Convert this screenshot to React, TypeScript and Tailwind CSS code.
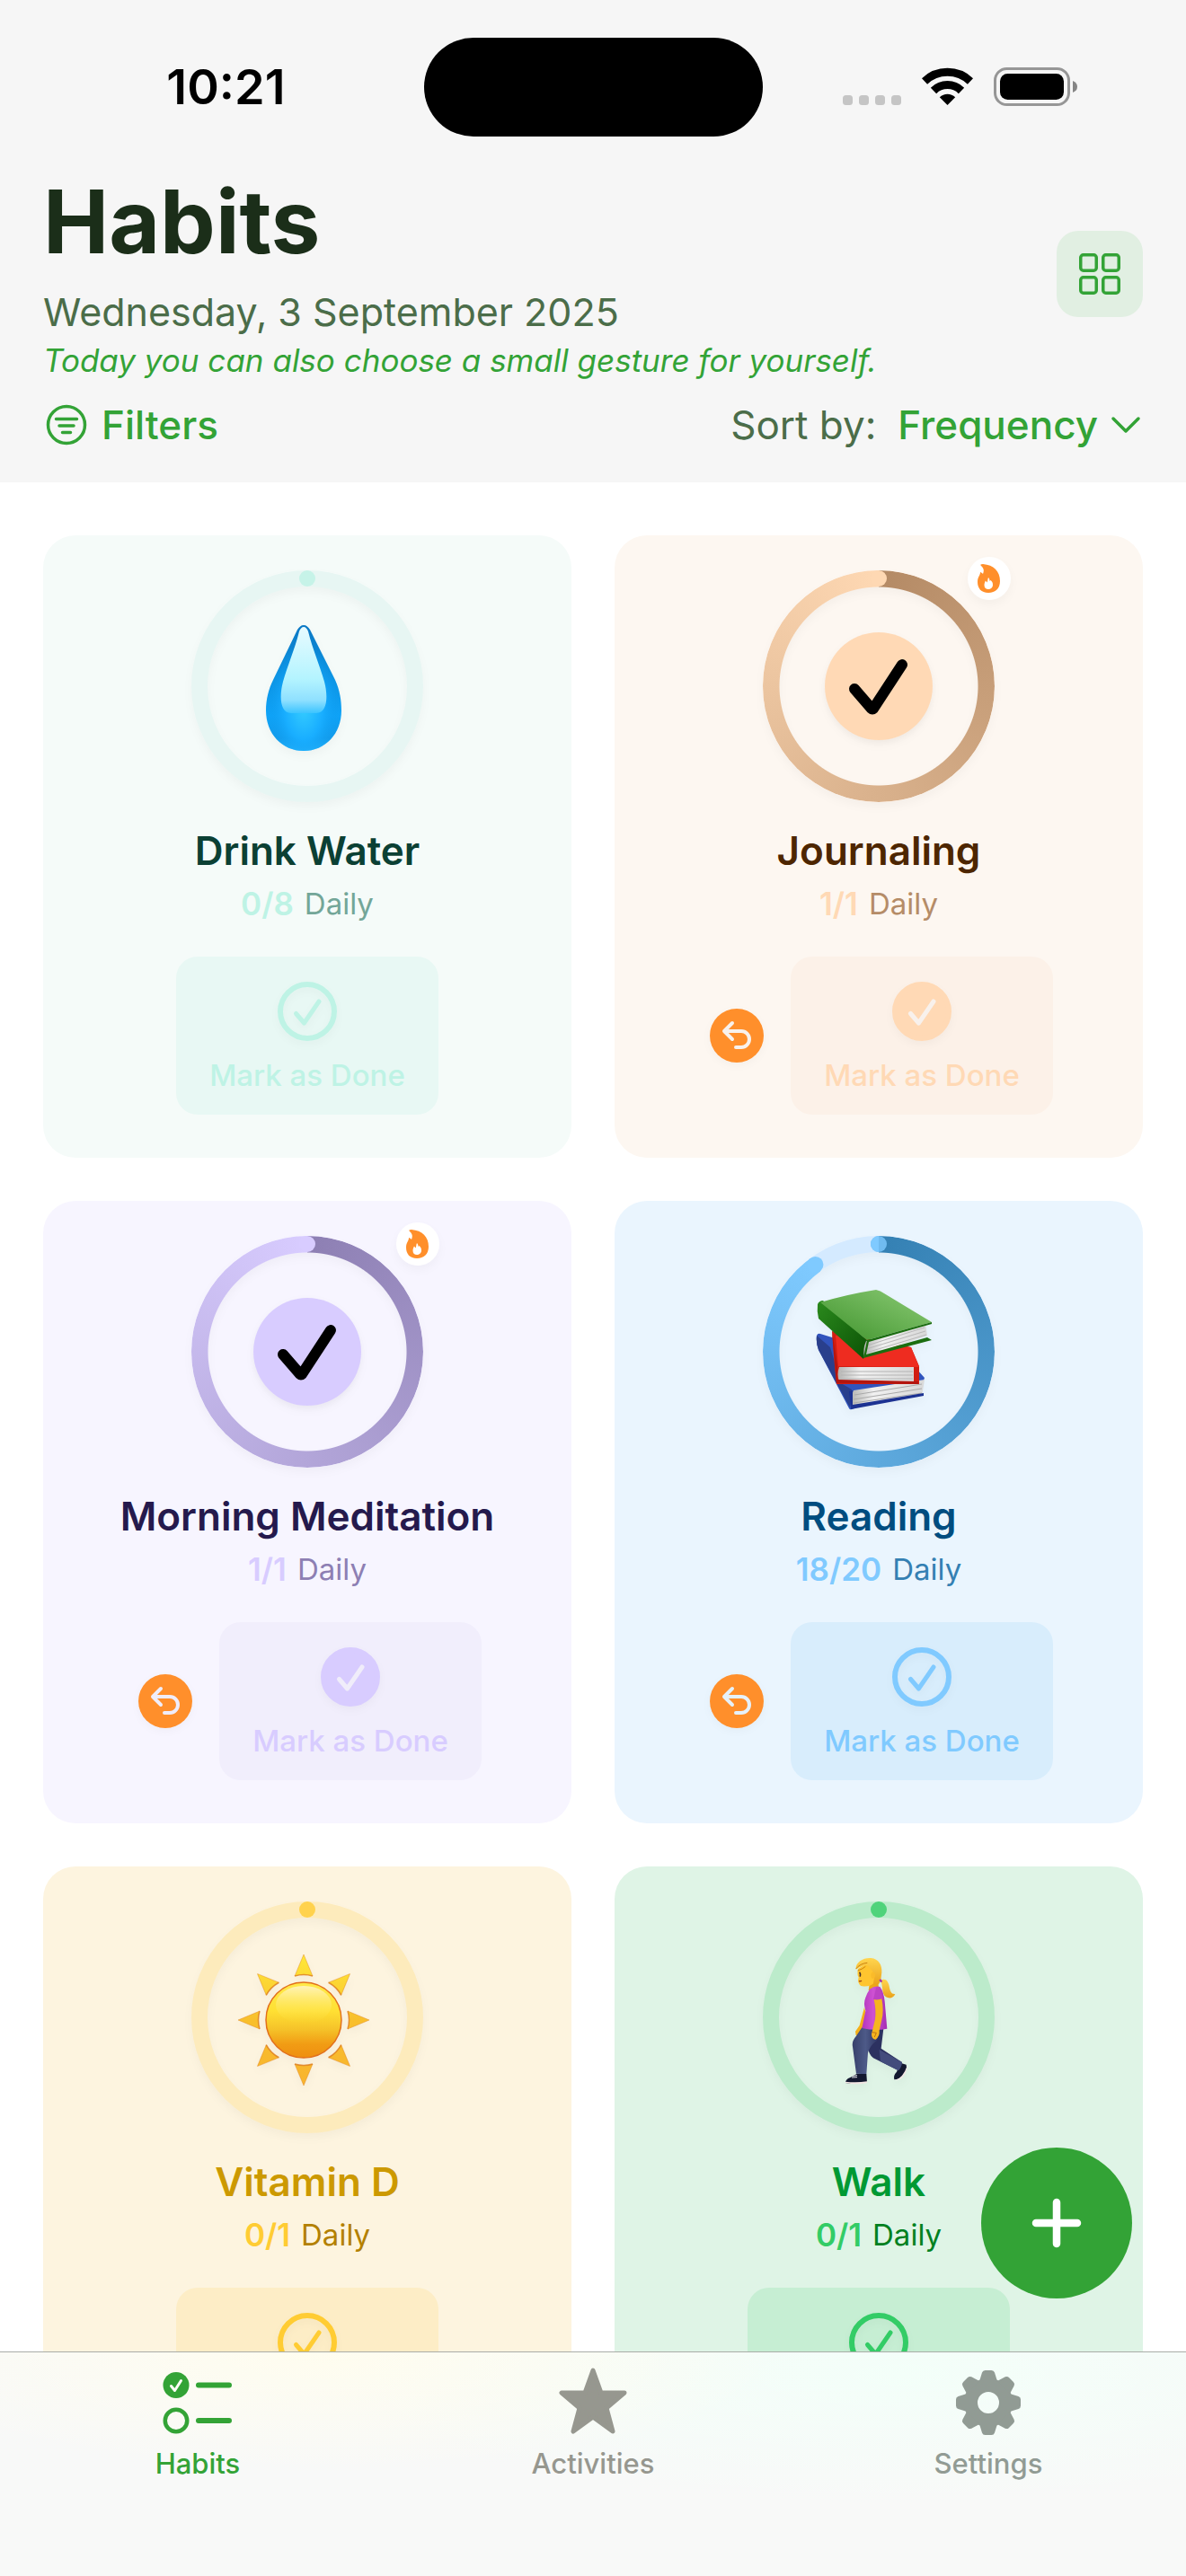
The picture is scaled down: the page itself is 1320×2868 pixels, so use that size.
import React from "react";

type Habit = {
  name: string;
  count: string;
  progress: number;
  complete?: boolean;
  undo?: boolean;
  emoji?: React.ReactNode;
  card: string;
  title: string;
  accent: string;
  muted: string;
  button: string;
  track: string;
  dark: string;
  light: string;
  cutout: string;
};

function Drop() {
  return (
    <svg viewBox="0 0 160 160" className="size-40" aria-hidden="true">
      <defs>
        <linearGradient id="dropBody" x1="0" y1="0" x2="0" y2="1">
          <stop offset="0" stopColor="#0b78c4" />
          <stop offset=".35" stopColor="#0c8fdd" />
          <stop offset=".72" stopColor="#0fa4f8" />
          <stop offset=".9" stopColor="#149be9" />
          <stop offset="1" stopColor="#2fbcff" />
        </linearGradient>
        <linearGradient id="dropShine" x1="0" y1="0" x2="0" y2="1">
          <stop offset="0" stopColor="#e8fbff" />
          <stop offset=".6" stopColor="#b4f4ff" />
          <stop offset=".85" stopColor="#8fe0ff" />
          <stop offset="1" stopColor="#3cc4ff" />
        </linearGradient>
        <radialGradient id="dropEdge" cx=".5" cy=".66" r=".5">
          <stop offset="0" stopColor="#35ccff" />
          <stop offset=".5" stopColor="#19aeff" />
          <stop offset="1" stopColor="#0a96ec" stopOpacity="0" />
        </radialGradient>
      </defs>
      <path d="M76 12c3 0 5 2 7 5l28 56c5 11 7 22 7 34 0 26-18 45-42 45s-42-19-42-45c0-12 3-24 8-34l27-56c2-3 4-5 7-5z" fill="url(#dropBody)" />
      <path d="M76 12c3 0 5 2 7 5l28 56c5 11 7 22 7 34 0 26-18 45-42 45s-42-19-42-45c0-12 3-24 8-34l27-56c2-3 4-5 7-5z" fill="url(#dropEdge)" />
      <path d="M76 14c2 0 4 2 5 5 5 20 13 38 18 56 4 15 4 35-9 35H62c-13 0-13-20-9-35 5-18 13-36 18-56 1-3 3-5 5-5z" fill="url(#dropShine)" />
    </svg>
  );
}

function Books() {
  return (
    <svg viewBox="0 0 160 160" className="size-40" aria-hidden="true">
      <defs>
        <linearGradient id="bookGreen" x1="0" y1="1" x2="1" y2="0">
          <stop offset="0" stopColor="#3f932c" />
          <stop offset="1" stopColor="#8ccb76" />
        </linearGradient>
        <linearGradient id="bookSpine" x1="0" y1="0" x2="1" y2="1">
          <stop offset="0" stopColor="#2b8a1d" />
          <stop offset="1" stopColor="#0b5205" />
        </linearGradient>
        <linearGradient id="bookPages" x1="0" y1="0" x2="1" y2="0">
          <stop offset="0" stopColor="#b5b5b3" />
          <stop offset=".3" stopColor="#f1f1f1" />
          <stop offset="1" stopColor="#d8d8d8" />
        </linearGradient>
      </defs>
      <path d="M11 62q1-3 4-2l13 4 94 35 9 10-3 8-78 27q-2 1-3-1L13 78q-3-8-2-16z" fill="#3154bd" />
      <path d="M11 62l15 13 12 40 12 7-2 20L13 78q-3-8-2-16z" fill="#293f8c" />
      <path d="M52 123l79-12-3 18-78 12q-2-10 2-18z" fill="url(#bookPages)" />
      <path d="M53 128l75-12M52 133l76-12M52 137l76-11" stroke="#aaa" strokeWidth="1" />
      <path d="M49 144l-2-20 4-1 0 16 79-13v3z" fill="#1c3292" />
      <path d="M28 57l88 18 9 21v20l-92 0q-3-27-5-59z" fill="#d11d12" />
      <path d="M32 62l84 13 9 22-90-1z" fill="#ee2c20" />
      <path d="M36 97h83v16H36q-3-8 0-16z" fill="url(#bookPages)" />
      <path d="M38 102h80M38 106h80M37 110h81" stroke="#b4b4b4" strokeWidth="1" />
      <path d="M28 57l6 38v16l90 2v3l-91-1z" fill="#b3150e" />
      <path d="M12 27q2-4 6-4l50 45-5 20L13 43q-2-8-1-16z" fill="url(#bookSpine)" />
      <path d="M66 68l66-20 2 14-70 24q-2-9 2-18z" fill="url(#bookPages)" />
      <path d="M67 73l64-20M66 77l66-20M66 81l67-20" stroke="#b8b8b8" strokeWidth="1" />
      <path d="M15 25q30-9 62-14 5 1 9 4l53 32-72 20z" fill="url(#bookGreen)" />
      <path d="M139 47l-72 20-4 20 76-20-5-3-68 19 3-14 70-20z" fill="#1b6d10" />
    </svg>
  );
}

function Sun() {
  const rays = [0, 45, 90, 135, 180, 225, 270, 315];
  return (
    <svg viewBox="0 0 160 160" className="size-40" aria-hidden="true">
      <defs>
        <linearGradient id="sunDisc" x1="0" y1="0" x2="0" y2="1">
          <stop offset="0" stopColor="#ffe94a" />
          <stop offset=".38" stopColor="#ffe033" />
          <stop offset=".62" stopColor="#f5c329" />
          <stop offset=".82" stopColor="#f19c14" />
          <stop offset="1" stopColor="#ef8f10" />
        </linearGradient>
        <linearGradient id="sunShine" x1="0" y1="0" x2="0" y2="1">
          <stop offset="0" stopColor="#fff3b8" />
          <stop offset="1" stopColor="#ffe338" stopOpacity="0" />
        </linearGradient>
        <linearGradient id="sunRay" gradientUnits="userSpaceOnUse" x1="0" y1="10" x2="0" y2="156">
          <stop offset="0" stopColor="#ffe838" />
          <stop offset=".5" stopColor="#f8bf2c" />
          <stop offset="1" stopColor="#f8b42f" />
        </linearGradient>
        <clipPath id="sunRays">
          {rays.map((a) => (
            <path key={a} d="M76 10l10 24q-10-3-20 0z" transform={`rotate(${a} 76 83)`} />
          ))}
        </clipPath>
      </defs>
      <rect width="160" height="160" fill="url(#sunRay)" clipPath="url(#sunRays)" />
      {rays.map((a) => (
        <g key={a} transform={`rotate(${a} 76 83)`} fill="none" stroke="#dc7a1a">
          <path d="M76 10l10 24M76 10L66 34" strokeWidth="1" opacity=".4" />
          <path d="M86 34q-10-3-20 0" strokeWidth="1.5" opacity=".8" />
        </g>
      ))}
      <circle cx="76" cy="83" r="42" fill="url(#sunDisc)" stroke="#e2701a" strokeWidth="1.5" />
      <ellipse cx="76" cy="66" rx="31" ry="21" fill="url(#sunShine)" />
    </svg>
  );
}

function Walker() {
  return (
    <svg viewBox="0 0 160 160" className="size-40" aria-hidden="true">
      <defs>
        <linearGradient id="hair" x1="0" y1="0" x2="0" y2="1">
          <stop offset="0" stopColor="#ffd54f" />
          <stop offset="1" stopColor="#eaa21a" />
        </linearGradient>
        <linearGradient id="shirt" x1="0" y1="0" x2="1" y2="0">
          <stop offset="0" stopColor="#b235bd" />
          <stop offset=".45" stopColor="#cf52d3" />
          <stop offset="1" stopColor="#a52db2" />
        </linearGradient>
        <linearGradient id="jeans" x1="0" y1="0" x2="1" y2="0">
          <stop offset="0" stopColor="#37406b" />
          <stop offset=".5" stopColor="#4d5a88" />
          <stop offset="1" stopColor="#2d3360" />
        </linearGradient>
      </defs>
      <g transform="translate(2 -6) scale(.3333)">
        <path d="M240 136c16-12 26 2 29 18 3 18 8 28 20 26-5 14-20 16-31 10-16-10-8-36-18-54z" fill="url(#hair)" />
        <path d="M186 225l-16 60-14 20 2 14 18-4 20-50z" fill="#f3b019" />
        <path d="M286 466q-4-14 8-26l12-30 20 6q4 18-8 32-14 18-32 18z" fill="#13182f" />
        <path d="M288 468q26-4 42-50-2 28-20 44-12 8-22 6z" fill="#f3e6e4" />
        <path d="M202 296h48l-8 66 70 46q-2 18-12 28l-84-42q-18-14-16-38z" fill="#2c3160" />
        <path d="M236 366l76 42q-2 18-12 28l-60-30z" fill="#434c7c" />
        <path d="M178 292h56l-6 44q-22 14-30 40l-5 72-34-2-12-90q-4-18 12-36z" fill="url(#jeans)" />
        <path d="M160 447h33l2 28q-36 8-72 2 0-12 16-18z" fill="#13182f" />
        <path d="M123 473q36 4 72-1v5q-36 7-72 0z" fill="#f3e6e4" />
        <path d="M204 140l28 0 2 20-20 14-14-6z" fill="#eda716" />
        <path d="M165 96q-4 22 2 28l-2 12q4 18 14 18 26 4 42-14l8-40-30-24z" fill="#ffc52f" />
        <path d="M158 98c-2-26 26-40 50-38 26 2 38 24 36 48l-3 24q-6 22-20 18-8-4-2-22 0-20-10-30-4-8-14-14-16 0-37 14z" fill="url(#hair)" />
        <path d="M158 96q14-18 38-20M190 88q-8 8-26 14" stroke="#c98212" strokeWidth="3" fill="none" />
        <ellipse cx="215" cy="118" rx="7" ry="11" fill="#fabb2a" />
        <path d="M171 109q3 5 1 11" stroke="#44302a" strokeWidth="5" fill="none" strokeLinecap="round" />
        <path d="M168 137q5 2 9-1" stroke="#9b3d18" strokeWidth="4" fill="none" />
        <path d="M204 164q18-14 34-8 12 14 16 48l8 92q-40 8-84-2l12-58q-8-26 0-44 4-14 14-28z" fill="url(#shirt)" />
        <path d="M218 198l26-4q8 44 0 72l-8 36q2 18-12 30-14-2-14-18l12-50q4-30-4-66z" fill="#f6b51f" />
        <path d="M226 158q16 4 22 36-14 8-32 4" fill="#bc43c4" />
        <path d="M212 308l14 2-6 14" stroke="#bc7413" strokeWidth="3" fill="none" />
        <path d="M146 454l16-2M144 459l18-1" stroke="#e9e9ef" strokeWidth="3" />
        <path d="M238 132l6 8" stroke="#a52db2" strokeWidth="7" />
      </g>
    </svg>
  );
}

function Ring({ habit }: { habit: Habit }) {
  const end = habit.progress * 360;
  const rad = (end * Math.PI) / 180;
  const gradient = `conic-gradient(${habit.dark} 0deg, ${habit.light} ${end}deg, transparent ${end}deg)`;
  return (
    <div className="relative flex size-60 items-center justify-center drop-shadow-[0_5px_5px_rgba(0,0,0,0.03)]">
      <div className="absolute -inset-[9px] rounded-full border-[18px]" style={{ borderColor: habit.track }} />
      {habit.progress > 0 && (
        <div
          className="absolute -inset-[9px] rounded-full [mask-image:radial-gradient(closest-side,transparent_110px,black_111px)]"
          style={{ backgroundImage: gradient }}
        />
      )}
      <svg viewBox="-129 -129 258 258" className="absolute -inset-[9px]" aria-hidden="true">
        {habit.progress > 0 && habit.progress < 1 && (
          <>
            <circle cx="0" cy="-120" r="9" fill="#70bbf0" />
            <path d="M0-129a9 9 0 0 0 0 18z" fill={habit.light} />
          </>
        )}
        <circle cx={120 * Math.sin(rad)} cy={-120 * Math.cos(rad)} r="9" fill={habit.light} />
      </svg>
      {habit.complete ? (
        <svg viewBox="0 0 120 120" className="relative size-[120px] drop-shadow-[0_3px_4px_rgba(0,0,0,0.03)]" aria-hidden="true">
          <circle cx="60" cy="60" r="60" fill={habit.accent} />
          <path d="M33 63l19 22q1 1 2 0l32-49" fill="none" stroke="#000" strokeWidth="12" strokeLinecap="round" strokeLinejoin="round" />
        </svg>
      ) : (
        <div className="relative">{habit.emoji}</div>
      )}
      {habit.complete && (
        <svg viewBox="0 0 48 48" className="absolute -top-6 -right-[27px] size-12" role="img" aria-label="Streak">
          <circle cx="24" cy="24" r="24" fill="#fff" />
          <path
            fill="#ff8f2b"
            fillRule="evenodd"
            d="M14.500 8.500Q15 8 17 8c12 1 19 8 19 19 0 8-5 13-13 13S11 35 11 28c0-6 3-7 3-11 1 0 2 1 3 2 2-5 0-7-2-9q-1-1-.5-1.500zM23 23c-1 2-.5 4-1.500 5.500l-1.500-2c-1 2-1.500 3-1.500 5 0 3 2 4.500 4.500 4.500s5-1.500 5-5c0-3-1.500-4-2.500-5-.5 0-.5 1-1 1 0-2-.5-3-1.500-4z"
          />
        </svg>
      )}
    </div>
  );
}

function CheckIcon({ filled, accent, cutout }: { filled?: boolean; accent: string; cutout: string }) {
  return (
    <svg viewBox="0 0 66 66" className="size-[66px] drop-shadow-[0_4px_4px_rgba(0,0,0,0.03)]" aria-hidden="true">
      <circle cx="33" cy="33" r="30" fill={filled ? accent : "none"} stroke={accent} strokeWidth="6" />
      <path d="M20.500 35.500L29.500 46 46 22" fill="none" stroke={filled ? cutout : accent} strokeWidth="5" strokeLinecap="round" strokeLinejoin="round" />
    </svg>
  );
}

function HabitCard({ habit }: { habit: Habit }) {
  return (
    <article className={`flex flex-col items-center rounded-[36px] p-12 ${habit.card}`}>
      <Ring habit={habit} />
      <h2 className={`mt-9 text-[44px] leading-[54px] font-semibold ${habit.title}`}>{habit.name}</h2>
      <p className="mt-3 flex items-center gap-3 leading-10">
        <span className="text-[35px] font-semibold" style={{ color: habit.accent }}>{habit.count}</span>
        <span className={`text-[33px] ${habit.muted}`}>Daily</span>
      </p>
      <div className="mt-[39px] flex items-center gap-6">
        {habit.undo && (
          <button type="button" aria-label={`Undo ${habit.name}`} className="flex w-[72px] justify-center">
            <svg viewBox="0 0 60 60" className="size-[60px] drop-shadow-[0_3px_4px_rgba(0,0,0,0.03)]" aria-hidden="true">
              <circle cx="30" cy="30" r="30" fill="#ff8f2b" />
              <path d="M25 16l-9 9 9 9M17 25h18a9 9 0 0 1 0 18h-6" fill="none" stroke={habit.cutout} strokeWidth="4" strokeLinecap="round" strokeLinejoin="round" />
            </svg>
          </button>
        )}
        <button type="button" className={`flex w-[292px] flex-col items-center gap-[18px] rounded-3xl pt-7 pb-6 ${habit.button}`}>
          <CheckIcon filled={habit.complete} accent={habit.accent} cutout={habit.cutout} />
          <span className="text-[33px] leading-10 font-medium whitespace-nowrap" style={{ color: habit.accent }}>Mark as Done</span>
        </button>
      </div>
    </article>
  );
}

const habits: Habit[] = [
  { name: "Drink Water", count: "0/8", progress: 0, emoji: <Drop />, card: "bg-[#f5fbf9]", title: "text-[#0b4034]", accent: "#bef3e5", muted: "text-[#73a698]", button: "bg-[#e8f8f4]", track: "#e7f6f3", dark: "#73a698", light: "#c6f3e8", cutout: "#f5fbf9" },
  { name: "Journaling", count: "1/1", progress: 1, complete: true, undo: true, card: "bg-[#fdf7f1]", title: "text-[#4d2600]", accent: "#ffd9b5", muted: "text-[#b58c67]", button: "bg-[#fcf1e8]", track: "#fdeada", dark: "#b48a65", light: "#fed8b3", cutout: "#f8f1ec" },
  { name: "Morning Meditation", count: "1/1", progress: 1, complete: true, undo: true, card: "bg-[#f7f5ff]", title: "text-[#251a4d]", accent: "#d8ccff", muted: "text-[#8d7fb3]", button: "bg-[#f1eefc]", track: "#ece7ff", dark: "#8d7fb3", light: "#d8ccff", cutout: "#f0edfa" },
  { name: "Reading", count: "18/20", progress: 0.9, undo: true, emoji: <Books />, card: "bg-[#eaf5fe]", title: "text-[#004d80]", accent: "#80caff", muted: "text-[#3480b3]", button: "bg-[#d8edfc]", track: "#d4eaff", dark: "#3480b3", light: "#7fcaff", cutout: "#e6f1fa" },
  { name: "Vitamin D", count: "0/1", progress: 0, emoji: <Sun />, card: "bg-[#fdf4df]", title: "text-[#cc9900]", accent: "#ffcc33", muted: "text-[#b38000]", button: "bg-[#fdedc6]", track: "#fdebbc", dark: "#b38000", light: "#ffd24d", cutout: "#fdf4df" },
  { name: "Walk", count: "0/1", progress: 0, emoji: <Walker />, card: "bg-[#dff4e6]", title: "text-[#009933]", accent: "#33cc66", muted: "text-[#008020]", button: "bg-[#c6eed3]", track: "#bcebcb", dark: "#008020", light: "#50d37b", cutout: "#dff4e6" },
];

function StatusBar() {
  return (
    <div className="grid grid-cols-[1fr_auto_1fr] items-center pt-[42px]">
      <time className="justify-self-end pr-[154px] text-[54px] leading-[60px] font-semibold text-black">10:21</time>
      <div className="h-[110px] w-[377px] rounded-full bg-black" />
      <div className="flex items-center pl-[89px]">
        <svg viewBox="0 0 65 44" className="h-11 w-[65px]" fill="#c5c5c5" aria-hidden="true">
          <rect x="0" y="31" width="11" height="11" rx="3.500" />
          <rect x="18" y="31" width="11" height="11" rx="3.500" />
          <rect x="36" y="31" width="11" height="11" rx="3.500" />
          <rect x="54" y="31" width="11" height="11" rx="3.500" />
        </svg>
        <svg viewBox="0 0 57 44" className="ml-[23px] h-11 w-[57px]" fill="none" stroke="#000" strokeWidth="9" aria-hidden="true">
          <path d="M3 15.500a37 37 0 0 1 51 0" />
          <path d="M13 26a22 22 0 0 1 31 0" />
          <path d="M28.500 42L19.800 33.200a12.500 12.500 0 0 1 17.400 0z" fill="#000" stroke="none" />
        </svg>
        <svg viewBox="0 0 94 44" className="ml-[23px] h-11 w-[94px]" aria-hidden="true">
          <rect x="1.500" y="1.500" width="82" height="40" rx="13" fill="none" stroke="#969696" strokeWidth="3" />
          <rect x="7" y="7" width="71" height="29" rx="8.500" fill="#000" />
          <path d="M88 15q5 2 5 6.500T88 28z" fill="#858585" />
        </svg>
      </div>
    </div>
  );
}

function Header() {
  return (
    <header className="shrink-0 bg-[#f6f6f6] pb-[34px]">
      <StatusBar />
      <div className="flex items-center justify-between px-12 pt-[33px]">
        <div>
          <h1 className="text-[98px] leading-[124px] font-bold text-[#1b2e19]">Habits</h1>
          <p className="mt-[10px] text-[43px] leading-[56px] text-[#4b6d49]">Wednesday, 3 September 2025</p>
          <p className="mt-[2px] text-[35px] leading-[48px] text-[#33a336] italic">Today you can also choose a small gesture for yourself.</p>
        </div>
        <button type="button" aria-label="Grid view" className="flex size-24 items-center justify-center rounded-3xl bg-[#e1efe2]">
          <svg viewBox="0 0 46 46" className="size-[46px]" fill="none" stroke="#33a336" strokeWidth="3.500" aria-hidden="true">
            <rect x="1.750" y="1.750" width="17.500" height="17.500" rx="3" />
            <rect x="26.750" y="1.750" width="17.500" height="17.500" rx="3" />
            <rect x="1.750" y="26.750" width="17.500" height="17.500" rx="3" />
            <rect x="26.750" y="26.750" width="17.500" height="17.500" rx="3" />
          </svg>
        </button>
      </div>
      <div className="mt-[18px] flex items-center justify-between px-12 text-[44px] leading-[60px]">
        <button type="button" className="flex items-center gap-4 pl-[3px] font-medium text-[#33a336]">
          <svg viewBox="0 0 46 46" className="size-[46px]" fill="none" stroke="#33a336" strokeWidth="3.500" strokeLinecap="round" aria-hidden="true">
            <circle cx="23" cy="23" r="20.500" />
            <path d="M11.500 16.500h23M15 24h16M18.500 31.500h9" />
          </svg>
          Filters
        </button>
        <div className="flex items-center">
          <label htmlFor="sort" className="text-[#4b6d49]">Sort by:</label>
          <select id="sort" defaultValue="Frequency" className="ml-6 appearance-none bg-transparent font-medium text-[#33a336] [field-sizing:content]">
            <option>Frequency</option>
            <option>Name</option>
          </select>
          <svg viewBox="0 0 34 20" className="pointer-events-none mr-[2px] ml-[14px] h-5 w-[34px]" fill="none" stroke="#33a336" strokeWidth="3.500" strokeLinecap="round" strokeLinejoin="round" aria-hidden="true">
            <path d="M3 3l14 14L31 3" />
          </svg>
        </div>
      </div>
    </header>
  );
}

function TabBar() {
  const teeth = [0, 45, 90, 135, 180, 225, 270, 315];
  const tab = "flex flex-col items-center gap-2 text-[31px] leading-10 font-medium";
  return (
    <nav className="grid h-[250px] shrink-0 grid-cols-3 items-start border-t border-[#a9ada8] bg-[#f8f9f8] bg-[radial-gradient(ellipse_at_27%_0%,#fffdef_0%,transparent_38%),radial-gradient(ellipse_at_76%_10%,#f3fff9_0%,transparent_45%)] pt-4">
      <a href="#habits" aria-current="page" className={`${tab} text-[#33a336]`}>
        <svg viewBox="0 -6 78 80" className="h-20 w-[78px]" fill="none" stroke="#33a336" aria-hidden="true">
          <circle cx="15" cy="14.500" r="14.500" fill="#33a336" stroke="none" />
          <path d="M9.500 15.500l4 5 7-11" stroke="#fdfdf6" strokeWidth="3" strokeLinecap="round" strokeLinejoin="round" />
          <circle cx="15" cy="54" r="12.250" strokeWidth="4.500" />
          <path d="M40 14.500h34M40 54h34" strokeWidth="6" strokeLinecap="round" />
        </svg>
        Habits
      </a>
      <a href="#activities" className={`${tab} text-[#96978f]`}>
        <svg viewBox="0 -1 76 80" className="h-20 w-[76px]" fill="#96978f" stroke="#96978f" strokeWidth="5" strokeLinejoin="round" aria-hidden="true">
          <path d="M38 3l9 25h26L53 45l7 26-22-16-22 16 7-26L3 28h26z" />
        </svg>
        Activities
      </a>
      <a href="#settings" className={`${tab} text-[#919b94]`}>
        <svg viewBox="-40 -40 80 80" className="size-20" aria-hidden="true">
          <circle r="19.500" fill="none" stroke="#919b94" strokeWidth="15" />
          {teeth.map((a) => (
            <path key={a} transform={`rotate(${a})`} fill="#919b94" d="M-10-24l1-3 2-6.500q.8-2.500 3.500-2.500h7q2.700 0 3.500 2.500l2 6.500 1 3z" />
          ))}
        </svg>
        Settings
      </a>
    </nav>
  );
}

export default function App() {
  return (
    <div className="flex h-screen flex-col bg-white font-['Inter',sans-serif]">
      <Header />
      <div className="relative min-h-0 flex-1">
        <main className="h-full overflow-y-auto px-12 pt-[59px] [scrollbar-width:none]">
          <div className="grid grid-cols-2 gap-12">
            {habits.map((h) => (
              <HabitCard key={h.name} habit={h} />
            ))}
          </div>
        </main>
        <button type="button" aria-label="Add habit" className="absolute right-[60px] bottom-[59px] flex size-[168px] items-center justify-center rounded-full bg-[#33a336]">
          <svg viewBox="0 0 56 56" className="size-14" stroke="#fff" strokeWidth="8.500" strokeLinecap="round" aria-hidden="true">
            <path d="M28 5v46M5 28h46" />
          </svg>
        </button>
      </div>
      <TabBar />
    </div>
  );
}
